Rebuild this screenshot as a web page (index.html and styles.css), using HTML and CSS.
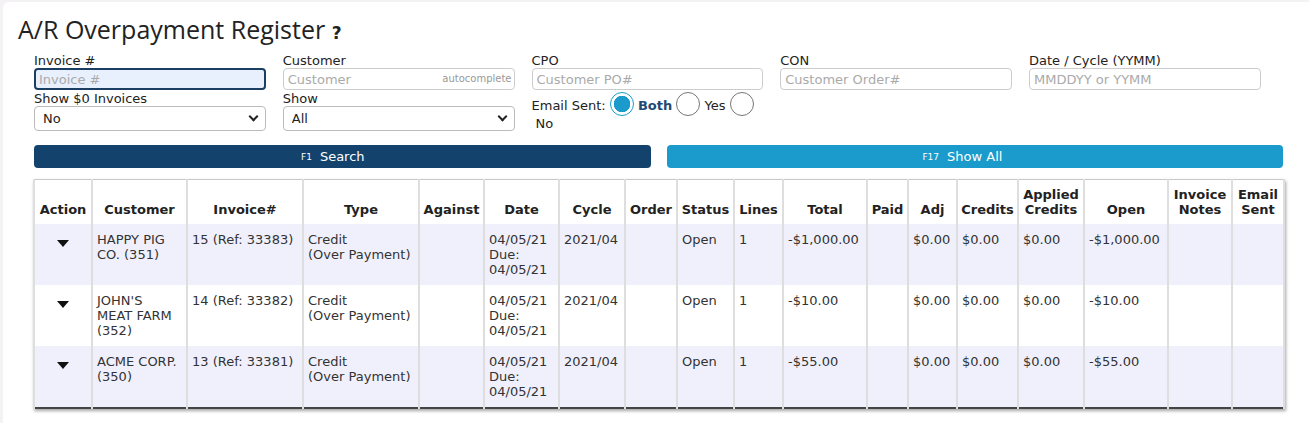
FILE: index.html
```html
<!DOCTYPE html>
<html lang="en">
<head>
  <meta charset="UTF-8">
  <meta name="viewport" content="width=device-width, initial-scale=1.0">
  <title>A/R Overpayment Register</title>
  <link rel="stylesheet" href="styles.css">
</head>
<body>
  <div class="page">
    <h1 class="title">A/R Overpayment Register <span class="help">?</span></h1>

    <form class="filters">
      <div class="field">
        <label for="invoice">Invoice #</label>
        <input type="text" id="invoice" class="focused" placeholder="Invoice #">
      </div>
      <div class="field">
        <label for="customer">Customer</label>
        <div class="auto-wrap">
          <input type="text" id="customer" placeholder="Customer">
          <span class="auto-hint">autocomplete</span>
        </div>
      </div>
      <div class="field">
        <label for="cpo">CPO</label>
        <input type="text" id="cpo" placeholder="Customer PO#">
      </div>
      <div class="field">
        <label for="con">CON</label>
        <input type="text" id="con" placeholder="Customer Order#">
      </div>
      <div class="field">
        <label for="date">Date / Cycle (YYMM)</label>
        <input type="text" id="date" placeholder="MMDDYY or YYMM">
      </div>

      <div class="field">
        <label for="zero">Show $0 Invoices</label>
        <div class="select-wrap">
          <select id="zero"><option>No</option><option>Yes</option></select>
        </div>
      </div>
      <div class="field">
        <label for="show">Show</label>
        <div class="select-wrap">
          <select id="show"><option>All</option></select>
        </div>
      </div>
      <div class="field email-field">
        <span class="email-label">Email Sent:</span>
        <span class="radio checked"></span> <b class="radio-text on">Both</b>
        <span class="radio"></span> <span class="radio-text">Yes</span>
        <span class="radio"></span> <span class="radio-text">No</span>
      </div>
    </form>

    <div class="actions">
      <button type="button" class="btn btn-search"><span class="btn-label"><small>F1</small>Search</span></button>
      <button type="button" class="btn btn-all"><span class="btn-label"><small>F17</small>Show All</span></button>
    </div>

    <table class="register">
      <colgroup>
        <col style="width:58px"><col style="width:95px"><col style="width:116px"><col style="width:116px">
        <col style="width:65px"><col style="width:75px"><col style="width:66px"><col style="width:52px">
        <col style="width:57px"><col style="width:49px"><col style="width:84px"><col style="width:41px">
        <col style="width:49px"><col style="width:61px"><col style="width:66px"><col style="width:84px">
        <col style="width:64px"><col style="width:52px">
      </colgroup>
      <thead>
        <tr>
          <th>Action</th><th>Customer</th><th>Invoice#</th><th>Type</th><th>Against</th>
          <th>Date</th><th>Cycle</th><th>Order</th><th>Status</th><th>Lines</th>
          <th>Total</th><th>Paid</th><th>Adj</th><th>Credits</th><th>Applied Credits</th>
          <th>Open</th><th>Invoice Notes</th><th>Email Sent</th>
        </tr>
      </thead>
      <tbody>
        <tr>
          <td class="act"><svg width="12" height="7" viewBox="0 0 12 7"><path d="M0 0h12L6 7z" fill="#111"/></svg></td>
          <td>HAPPY PIG CO. (351)</td>
          <td>15 (Ref: 33383)</td>
          <td>Credit<br>(Over Payment)</td>
          <td></td>
          <td>04/05/21<br>Due:<br>04/05/21</td>
          <td>2021/04</td>
          <td></td>
          <td>Open</td>
          <td>1</td>
          <td>-$1,000.00</td>
          <td></td>
          <td>$0.00</td>
          <td>$0.00</td>
          <td>$0.00</td>
          <td>-$1,000.00</td>
          <td></td>
          <td></td>
        </tr>
        <tr>
          <td class="act"><svg width="12" height="7" viewBox="0 0 12 7"><path d="M0 0h12L6 7z" fill="#111"/></svg></td>
          <td>JOHN'S MEAT FARM (352)</td>
          <td>14 (Ref: 33382)</td>
          <td>Credit<br>(Over Payment)</td>
          <td></td>
          <td>04/05/21<br>Due:<br>04/05/21</td>
          <td>2021/04</td>
          <td></td>
          <td>Open</td>
          <td>1</td>
          <td>-$10.00</td>
          <td></td>
          <td>$0.00</td>
          <td>$0.00</td>
          <td>$0.00</td>
          <td>-$10.00</td>
          <td></td>
          <td></td>
        </tr>
        <tr>
          <td class="act"><svg width="12" height="7" viewBox="0 0 12 7"><path d="M0 0h12L6 7z" fill="#111"/></svg></td>
          <td>ACME CORP. (350)</td>
          <td>13 (Ref: 33381)</td>
          <td>Credit<br>(Over Payment)</td>
          <td></td>
          <td>04/05/21<br>Due:<br>04/05/21</td>
          <td>2021/04</td>
          <td></td>
          <td>Open</td>
          <td>1</td>
          <td>-$55.00</td>
          <td></td>
          <td>$0.00</td>
          <td>$0.00</td>
          <td>$0.00</td>
          <td>-$55.00</td>
          <td></td>
          <td></td>
        </tr>
      </tbody>
    </table>
  </div>
</body>
</html>
```

FILE: styles.css
```css
html, body {
  margin: 0;
  height: 100%;
}

body {
  background-color: #f5f2f5;
  font-family: "DejaVu Sans", Verdana, sans-serif;
  font-size: 13px;
  color: #222;
}

.page {
  background: #fff;
  margin: 2px 0 0 3px;
  min-height: calc(100% - 2px);
  border-radius: 6px 0 0 0;
  padding: 12px 26px 20px 15px;
  box-sizing: border-box;
}

.title {
  font-family: "Open Sans", "Liberation Sans", sans-serif;
  font-weight: 400;
  font-size: 25px;
  line-height: 30px;
  margin: 0 0 5px;
  color: #222;
}

.help {
  font-family: "DejaVu Sans", sans-serif;
  font-weight: bold;
  font-size: 17px;
}

/* filter form */
.filters {
  display: grid;
  grid-template-columns: repeat(5, 248.75px);
  row-gap: 1px;
  padding-left: 16px;
}

.field {
  padding-right: 17px;
}

.field label {
  display: block;
  line-height: 15px;
}

.field input {
  display: block;
  width: 100%;
  box-sizing: border-box;
  height: 22px;
  border: 1px solid #ccc;
  border-radius: 4px;
  padding: 0 4px;
  font-family: inherit;
  font-size: 13px;
  color: #333;
  background: #fff;
}

.field input::placeholder {
  color: #aaa;
}

.field input.focused {
  border: 2px solid #1b3f63;
  background: #e8f0fe;
  padding: 0 3px;
}

.auto-wrap {
  position: relative;
}

.auto-hint {
  position: absolute;
  right: 3px;
  top: 5px;
  font-size: 10px;
  color: #999;
}

.select-wrap {
  position: relative;
}

.select-wrap select {
  display: block;
  width: 100%;
  height: 25px;
  border: 1px solid #bbb;
  border-radius: 4px;
  padding: 0 8px;
  font-family: inherit;
  font-size: 13px;
  color: #222;
  background: #fff;
  appearance: none;
}

.select-wrap::after {
  content: "";
  position: absolute;
  right: 9px;
  top: 7px;
  width: 5px;
  height: 5px;
  border-right: 2.5px solid #222;
  border-bottom: 2.5px solid #222;
  transform: rotate(45deg);
}

.email-field {
  padding-top: 5px;
  line-height: 16px;
  width: 232px;
  padding-right: 0;
}

.radio {
  display: inline-block;
  box-sizing: border-box;
  width: 24px;
  height: 24px;
  border: 1px solid #777;
  border-radius: 50%;
  vertical-align: middle;
  margin-top: -4px;
}

.radio.checked {
  border-color: #1a9bcb;
  background: radial-gradient(circle, #1a9bcb 0 8px, #fff 8.5px);
}

.radio-text.on {
  color: #1e4a73;
}

.radio-text:last-child {
  padding-left: 4px;
}

/* buttons */
.actions {
  display: flex;
  gap: 16px;
  margin: 13px 0 11px 16px;
}

.btn {
  flex: 1;
  height: 23px;
  border: 0;
  border-radius: 4px;
  color: #fff;
  font-family: inherit;
  font-size: 13px;
  padding: 0;
  cursor: pointer;
}

.btn-label {
  position: relative;
}

.btn small {
  position: absolute;
  right: 100%;
  top: 3px;
  margin-right: 8px;
  font-size: 9px;
}

.btn-search {
  background: #13426d;
}

.btn-all {
  background: #1a9bcb;
}

/* register table */
.register {
  width: 1250px;
  margin-left: 15px;
  table-layout: fixed;
  border-collapse: collapse;
  border: 1px solid #c8c8c8;
  border-left-color: #666;
  border-right-color: #666;
  border-bottom: 2px solid #444;
  box-shadow: 1px 2px 3px rgba(0, 0, 0, 0.35);
  color: #333;
}

.register th,
.register td {
  border-left: 2px solid #dedede;
  border-right: 2px solid #dedede;
}

.register th {
  height: 44px;
  box-sizing: border-box;
  vertical-align: bottom;
  padding: 0 2px 7px;
  font-weight: bold;
  color: #222;
  line-height: 15px;
  background: #fff;
}

.register td {
  vertical-align: top;
  padding: 8px 5px 8px 4px;
  line-height: 15px;
}

.register tbody tr:nth-child(odd) td {
  background: #f0f0fc;
}

.register td.act {
  text-align: center;
  padding-top: 16px;
}

.register td.act svg {
  display: block;
  margin: 0 auto;
}
```
